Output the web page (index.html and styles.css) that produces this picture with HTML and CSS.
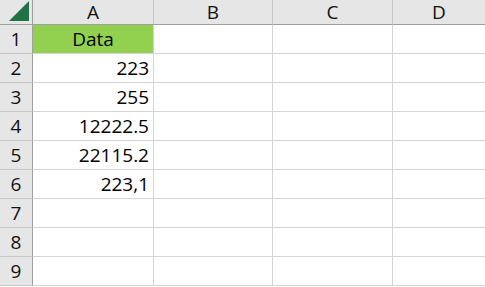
FILE: index.html
```html
<!DOCTYPE html>
<html lang="en">
<head>
    <meta charset="UTF-8">
    <meta name="viewport" content="width=device-width, initial-scale=1.0">
    <title>Sheet</title>
    <link rel="stylesheet" href="styles.css">
</head>
<body>
    <div class="sheet">
        <div class="corner"><span class="corner-mark"></span></div>
        <div class="col-head">A</div>
        <div class="col-head">B</div>
        <div class="col-head">C</div>
        <div class="col-head last">D</div>

        <div class="row-head">1</div>
        <div class="cell title">Data</div>
        <div class="cell"></div>
        <div class="cell"></div>
        <div class="cell last"></div>

        <div class="row-head">2</div>
        <div class="cell num">223</div>
        <div class="cell"></div>
        <div class="cell"></div>
        <div class="cell last"></div>

        <div class="row-head">3</div>
        <div class="cell num">255</div>
        <div class="cell"></div>
        <div class="cell"></div>
        <div class="cell last"></div>

        <div class="row-head">4</div>
        <div class="cell num">12222.5</div>
        <div class="cell"></div>
        <div class="cell"></div>
        <div class="cell last"></div>

        <div class="row-head">5</div>
        <div class="cell num">22115.2</div>
        <div class="cell"></div>
        <div class="cell"></div>
        <div class="cell last"></div>

        <div class="row-head">6</div>
        <div class="cell num">223,1</div>
        <div class="cell"></div>
        <div class="cell"></div>
        <div class="cell last"></div>

        <div class="row-head">7</div>
        <div class="cell"></div>
        <div class="cell"></div>
        <div class="cell"></div>
        <div class="cell last"></div>

        <div class="row-head">8</div>
        <div class="cell"></div>
        <div class="cell"></div>
        <div class="cell"></div>
        <div class="cell last"></div>

        <div class="row-head">9</div>
        <div class="cell"></div>
        <div class="cell"></div>
        <div class="cell"></div>
        <div class="cell last"></div>
    </div>
</body>
</html>
```

FILE: styles.css
```css
body {
    margin: 0;
    background: #fff;
    font-family: "Open Sans", "Liberation Sans", sans-serif;
    color: #000;
    overflow: hidden;
}

.sheet {
    display: grid;
    grid-template-columns: 33px 121px 119px 120px 1fr;
    grid-template-rows: 25px repeat(9, 29px);
    width: 485px;
}

.corner,
.col-head,
.row-head {
    background-color: #e6e6e6;
    box-sizing: border-box;
}

.corner {
    border-right: 1px solid #9f9f9f;
    border-bottom: 1px solid #9f9f9f;
    position: relative;
}

.corner-mark {
    position: absolute;
    left: 9px;
    top: 1px;
    width: 20px;
    height: 20px;
    background-color: #217346;
    clip-path: polygon(100% 0, 100% 100%, 0 100%);
}

.col-head {
    border-right: 1px solid #c8c8c8;
    border-bottom: 1px solid #9f9f9f;
    display: flex;
    align-items: center;
    justify-content: center;
    font-size: 19px;
    color: #111;
}

.row-head {
    border-right: 1px solid #9f9f9f;
    border-bottom: 1px solid #c8c8c8;
    display: flex;
    align-items: center;
    justify-content: center;
    font-size: 19px;
    color: #111;
}

.cell {
    box-sizing: border-box;
    border-right: 1px solid #d4d4d4;
    border-bottom: 1px solid #d4d4d4;
    display: flex;
    align-items: center;
    font-size: 19px;
    padding: 0 4px;
}

.last {
    border-right: none;
}

.num {
    justify-content: flex-end;
}

.title {
    background-color: #92d050;
    justify-content: center;
}
```
